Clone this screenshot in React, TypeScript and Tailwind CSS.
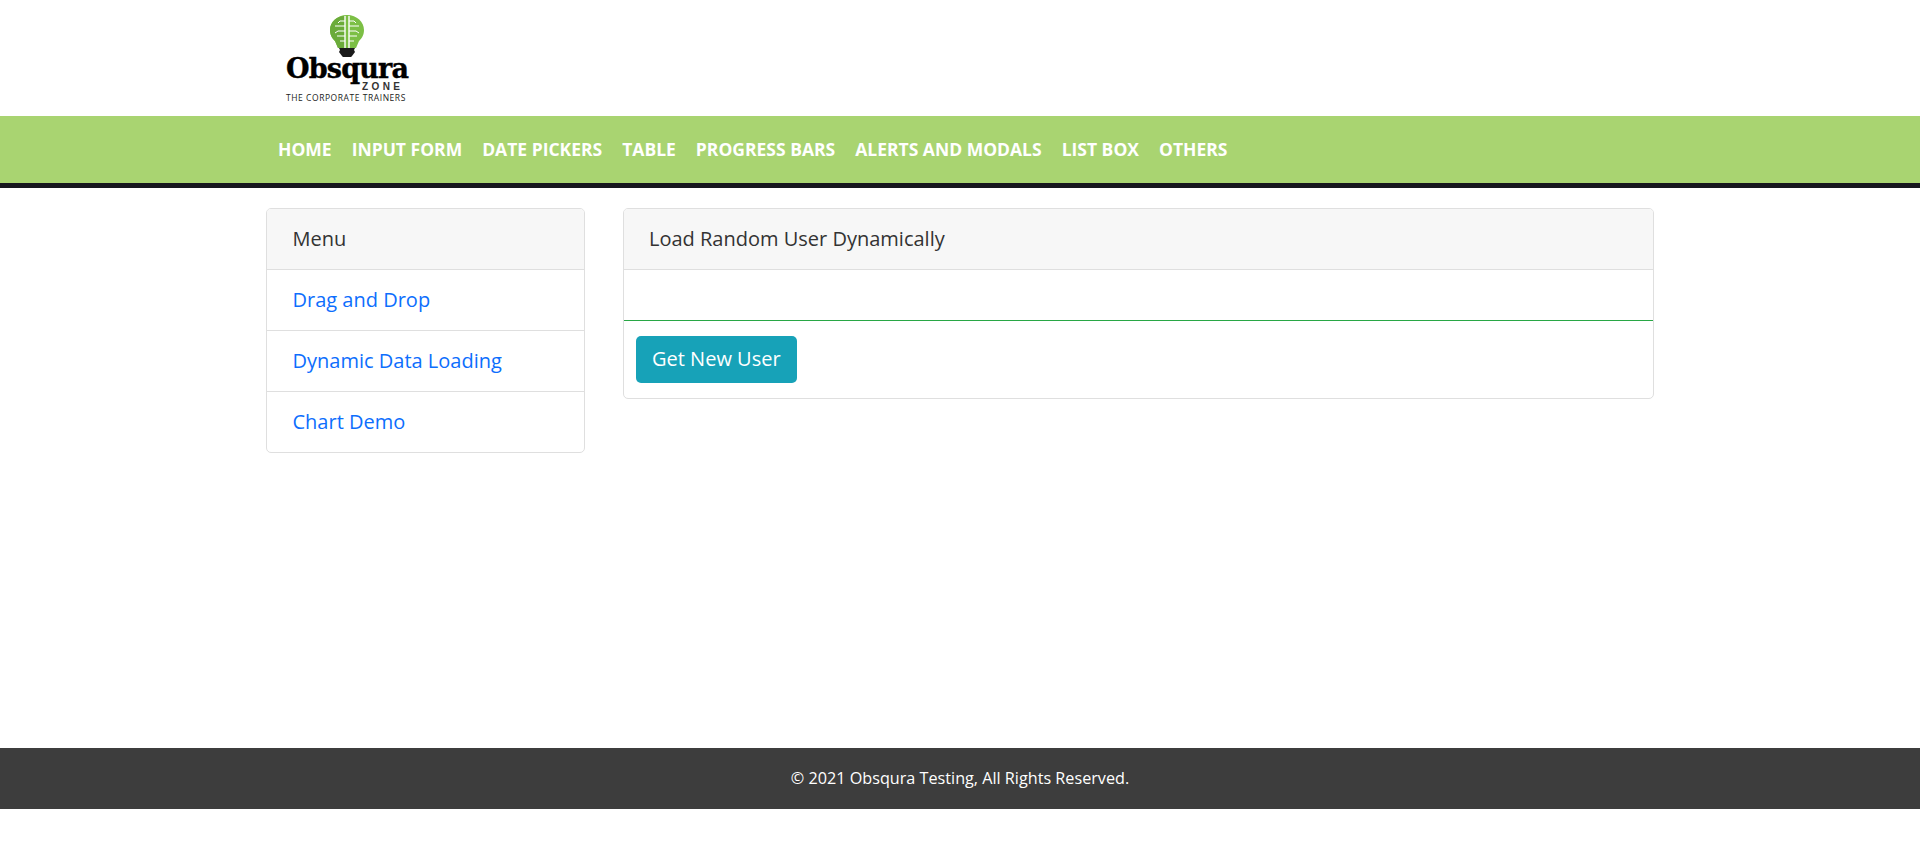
const navItems = ['Home', 'Input Form', 'Date Pickers', 'Table', 'Progress Bars', 'Alerts and Modals', 'List Box', 'Others'];
const menuItems = ['Drag and Drop', 'Dynamic Data Loading', 'Chart Demo'];

const Logo = () => (
  <div className="relative h-[116px] w-[145px]">
    <svg className="absolute left-[64px] top-[15px]" width="34" height="42" viewBox="0 0 34 42">
      <path d="M17 0C7 0 0 7 0 15c0 6 3 9 5 11l3 7h18l3-7c2-2 5-5 5-11C34 7 27 0 17 0z" fill="#7cbf45" />
      <path d="M15 1v32H8l-3-7C3 24 0 21 0 15 0 7 7 1 15 1z" fill="#6bab3a" />
      <path d="M15 1v32M19 1v32" stroke="#fff" strokeWidth="1.4" />
      <path d="M15 6h-5l-2 2M15 11h-10M15 16h-7l-3 2M15 21h-8M15 26h-5M19 6h5l2 2M19 11h10M19 16h7l3 2M19 21h8M19 26h5" stroke="#fff" strokeWidth="1" fill="none" />
      <path d="M9 33h16l-1 2 1 2-3 4a2 2 0 0 1-2 1h-6a2 2 0 0 1-2-1l-3-4 1-2z" fill="#1a1a1a" />
    </svg>
    <span className="absolute left-[20px] top-[57px] font-['DejaVu_Serif',serif] text-[27px] font-bold leading-[24px] tracking-[-0.8px] text-black [-webkit-text-stroke:0.4px_black]">Obsqura</span>
    <span className="absolute left-[96px] top-[82px] font-['Liberation_Sans',sans-serif] text-[10px] font-bold leading-[10px] tracking-[3.4px] text-[#333]">ZONE</span>
    <span className="absolute left-[20px] top-[94px] whitespace-nowrap font-['Open_Sans',sans-serif] text-[8.5px] leading-[8px] tracking-[0.55px] text-[#222]">THE CORPORATE TRAINERS</span>
  </div>
);

const App = () => {
  return (
    <div className="flex min-h-[847px] flex-col bg-white font-['Open_Sans',sans-serif]">
      <header className="mx-auto h-[116px] w-[1388px]">
        <Logo />
      </header>
      <nav className="h-[72px] border-b-[5px] border-[#16161d] bg-[#a9d471]">
        <ul className="mx-auto flex h-[67px] w-[1388px] items-center gap-5 pl-3">
          {navItems.map((item) => (
            <li key={item} className="text-[17.5px] font-bold uppercase text-white">{item}</li>
          ))}
        </ul>
      </nav>
      <main className="mx-auto flex h-[560px] w-[1388px] items-start gap-[38px] pt-5">
        <div className="w-[319px] overflow-hidden rounded-[5px] border border-[#dfdfdf]">
          <div className="flex h-[61px] items-center border-b border-[#dfdfdf] bg-[#f7f7f7] px-[25.5px] text-[20px] text-[#333]">Menu</div>
          {menuItems.map((item, i) => (
            <div key={item} className={`flex items-center px-[25.5px] text-[20px] text-[#0d6efd] ${i < 2 ? 'h-[61px] border-b border-[#dfdfdf]' : 'h-[60px]'}`}>{item}</div>
          ))}
        </div>
        <div className="w-[1031px] overflow-hidden rounded-[5px] border border-[#dfdfdf]">
          <div className="flex h-[61px] items-center border-b border-[#dfdfdf] bg-[#f7f7f7] px-[25px] text-[20px] text-[#333]">Load Random User Dynamically</div>
          <div className="h-[51px] border-b border-[#28a745]" />
          <div className="px-3 py-[15px]">
            <button className="h-[47px] rounded-[5px] bg-[#17a2b8] px-4 pb-[2px] text-[20px] text-white">Get New User</button>
          </div>
        </div>
      </main>
      <footer className="flex h-[61px] items-center justify-center bg-[#3d3d3d] text-[16.2px] text-white">© 2021 Obsqura Testing, All Rights Reserved.</footer>
    </div>
  );
};

export default App;
